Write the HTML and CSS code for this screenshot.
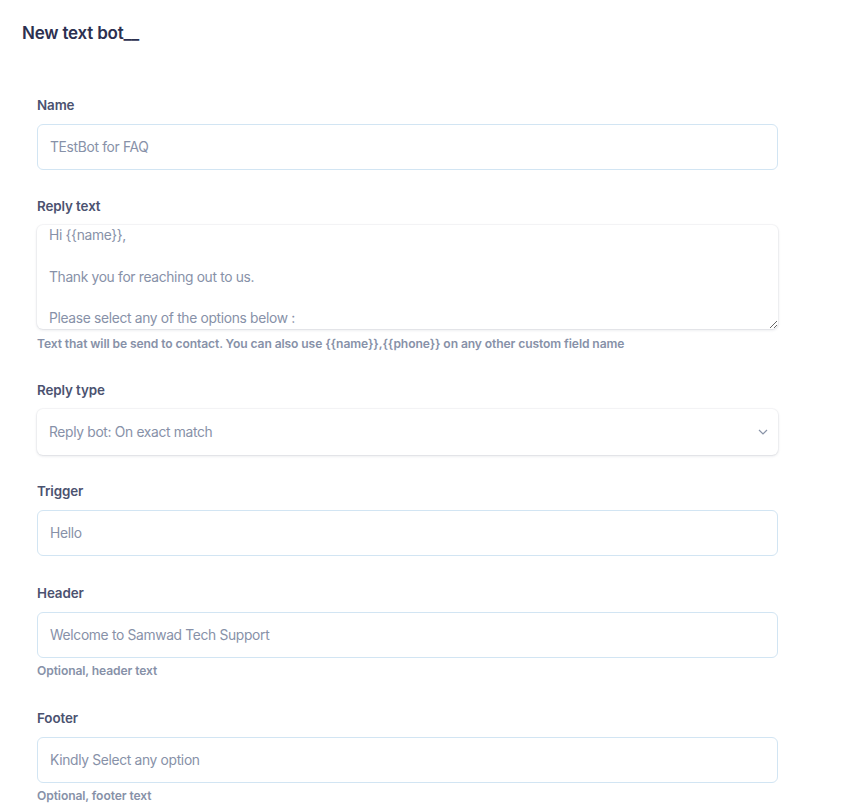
FILE: index.html
```html
<!DOCTYPE html>
<html>
<head>
<meta charset="utf-8">
<link rel="stylesheet" href="styles.css">
</head>
<body>
<div class="page">
  <h1 class="title">New text bot__</h1>
  <form class="form">
    <div class="field">
      <label class="label">Name</label>
      <div class="input">TEstBot for FAQ</div>
    </div>
    <div class="field">
      <label class="label">Reply text</label>
      <textarea class="textarea">Hi {{name}},

Thank you for reaching out to us.

Please select any of the options below :</textarea>
      <div class="help help-area">Text that will be send to contact. You can also use {{name}},{{phone}} on any other custom field name</div>
    </div>
    <div class="field">
      <label class="label">Reply type</label>
      <div class="select">
        <span>Reply bot: On exact match</span>
        <svg class="chev" width="10" height="6" viewBox="0 0 10 6"><path d="M1 1l4 4 4-4" fill="none" stroke="#8a94a8" stroke-width="1.2"/></svg>
      </div>
    </div>
    <div class="field field-wide">
      <label class="label">Trigger</label>
      <div class="input">Hello</div>
    </div>
    <div class="field">
      <label class="label">Header</label>
      <div class="input">Welcome to Samwad Tech Support</div>
      <div class="help">Optional, header text</div>
    </div>
    <div class="field">
      <label class="label">Footer</label>
      <div class="input">Kindly Select any option</div>
      <div class="help">Optional, footer text</div>
    </div>
  </form>
</div>
</body>
</html>
```
FILE: styles.css
```css
* { box-sizing: border-box; }
html, body { margin: 0; padding: 0; background: #fff; }
body { font-family: Inter, "Noto Sans", sans-serif; }
.page { padding: 24px 0 0 0; }
.title {
  margin: 0 0 54px 22px;
  font-size: 17px;
  line-height: 18px;
  font-weight: 600;
  color: #2c3050;
  letter-spacing: -0.2px;
}
.form { margin-left: 37px; width: 741px; display: flex; flex-direction: column; }
.field { display: flex; flex-direction: column; margin-bottom: 27px; }
.field-wide { margin-bottom: 28px; }
.label {
  font-size: 13.4px;
  line-height: 18px;
  font-weight: 600;
  color: #4b5270;
  margin-bottom: 10px;
  letter-spacing: -0.1px;
}
.input {
  height: 46px;
  border: 1px solid #d2e5f3;
  border-radius: 6px;
  padding: 0 12px;
  display: flex;
  align-items: center;
  font-size: 13.8px;
  color: #8791a8;
  letter-spacing: -0.32px;
}
.textarea {
  display: block;
  width: 100%;
  height: 104px;
  border: none;
  border-radius: 6px;
  box-shadow: 0 1px 3px rgba(30, 40, 70, 0.14), 0 0 0 1px rgba(30,40,70,0.03);
  padding: 0 12px;
  font-family: inherit;
  font-size: 13.8px;
  line-height: 20.8px;
  color: #8791a8;
  letter-spacing: -0.32px;
  overflow: hidden;
  resize: vertical;
  outline: none;
}
.help {
  margin-top: 5px;
  font-size: 12.1px;
  line-height: 16px;
  font-weight: 600;
  color: #8791a8;
  letter-spacing: -0.1px;
  margin-bottom: 3px;
}
.help-area { margin-top: 7px; margin-bottom: 2px; }
.select {
  height: 46px;
  border-radius: 6px;
  box-shadow: 0 1px 3px rgba(30, 40, 70, 0.14), 0 0 0 1px rgba(30,40,70,0.03);
  padding: 0 10px 0 12px;
  display: flex;
  align-items: center;
  justify-content: space-between;
  font-size: 13.8px;
  color: #8791a8;
  letter-spacing: -0.32px;
}
.chev { display: block; }
```
